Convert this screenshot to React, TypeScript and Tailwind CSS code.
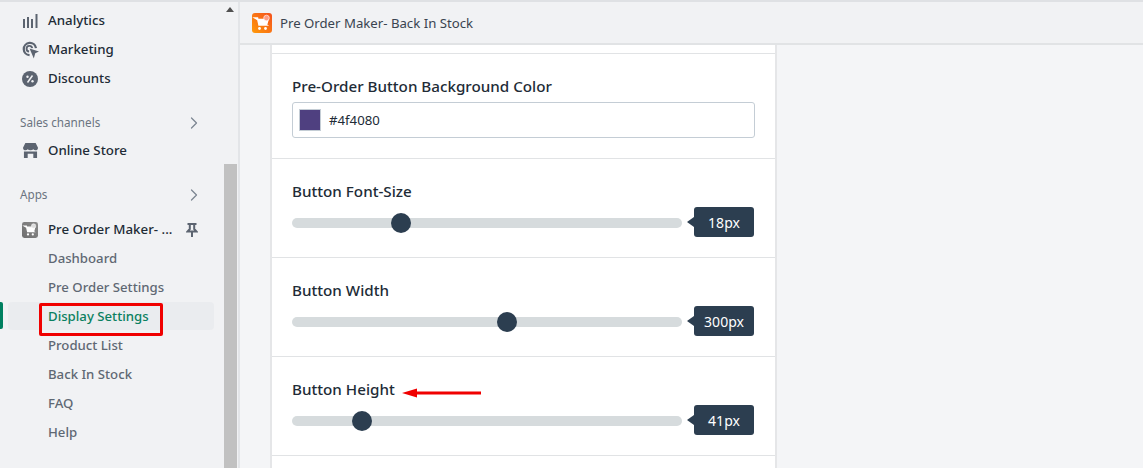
import React from "react";
import { ChevronRight } from "lucide-react";

const font = { fontFamily: '"Noto Sans", "Open Sans", sans-serif' };

const AnalyticsIcon = () => (
  <svg width="15" height="14" viewBox="0 0 15 14" fill="#5c6470">
    <rect x="0" y="5" width="2" height="9" />
    <rect x="4" y="3" width="2" height="11" />
    <rect x="8" y="5" width="2" height="9" />
    <rect x="12.500" y="0" width="2" height="14" />
  </svg>
);

const MarketingIcon = () => (
  <svg width="17" height="18" viewBox="0 0 18 18" fill="none">
    <path d="M8 14.500A6.500 6.500 0 1 1 14.800 7" stroke="#5c6470" strokeWidth="2.400" />
    <path d="M7.500 10.600A3 3 0 1 1 10.800 7" stroke="#5c6470" strokeWidth="2" />
    <path d="M8 7.500 18 10.500 14 12.500 12.500 18Z" fill="#5c6470" />
  </svg>
);

const DiscountIcon = () => (
  <svg width="16" height="16" viewBox="0 0 16 16">
    <circle cx="8" cy="8" r="8" fill="#5c6470" />
    <path d="M10.500 4.500 5.500 11.500" stroke="#f1f2f4" strokeWidth="1.500" />
    <circle cx="5.500" cy="5.800" r="1.200" fill="#f1f2f4" />
    <circle cx="10.500" cy="10.200" r="1.200" fill="#f1f2f4" />
  </svg>
);

const StoreIcon = () => (
  <svg width="15" height="15" viewBox="0 0 16 16" fill="#5c6470">
    <path d="M2.500 0h11L16 5c0 1.600-1.100 2.800-2.700 2.800-.9 0-1.700-.4-2.300-1.100-.7.7-1.700 1.100-3 1.100s-2.300-.4-3-1.100C4.400 7.400 3.600 7.800 2.700 7.800 1.100 7.800 0 6.600 0 5z" />
    <path d="M1 9h14v7h-4v-4.500H5V16H1z" />
  </svg>
);

const CartBadge = ({ size, grey }: { size: number; grey?: boolean }) => (
  <svg width={size} height={size} viewBox="0 0 20 20">
    <defs>
      <linearGradient id={grey ? "cartGrey" : "cartOrange"} x1="0" y1="1" x2="1" y2="0">
        <stop offset="0" stopColor={grey ? "#6f6f6f" : "#ff9a0a"} />
        <stop offset="1" stopColor={grey ? "#8a8a8a" : "#f4511e"} />
      </linearGradient>
    </defs>
    <rect width="20" height="20" rx="3" fill={`url(#${grey ? "cartGrey" : "cartOrange"})`} />
    <path d="M3 5h2.500l1.500 7h7.500l1.500-5.500H6l1 5.500h7.500z" fill="#fff" stroke="#fff" strokeWidth="1.500" />
    <circle cx="7.500" cy="15.500" r="1.400" fill="#fff" />
    <circle cx="13.500" cy="15.500" r="1.400" fill="#fff" />
    <circle cx="14.500" cy="5" r="2.800" fill={grey ? "#ddd" : "#ff9d85"} stroke="#fff" strokeWidth="0.600" />
  </svg>
);

const PinIcon = () => (
  <svg width="12" height="14" viewBox="0 0 12 14" fill="none" stroke="#5c6470" strokeWidth="2">
    <path d="M1.500 1h9M3.800 1v5L1.500 8.500h9L8.200 6V1M6 8.500V14" />
  </svg>
);

const NavRow = ({ icon, label }: { icon: React.ReactNode; label: string }) => (
  <div className="flex h-[29px] items-center">
    <div className="flex w-[48px] justify-center pl-[12px]">{icon}</div>
    <span className="text-[13.300px] font-medium text-[#212b36]">{label}</span>
  </div>
);

const SubRow = ({ label }: { label: string }) => (
  <div className="flex h-[29px] items-center pl-[48px] text-[13.200px] font-medium text-[#5f6873]">{label}</div>
);

const SectionHead = ({ label }: { label: string }) => (
  <div className="flex h-[20px] items-center justify-between pr-[20px] pl-[20px] text-[11.700px] text-[#6b7480]">
    <span>{label}</span>
    <ChevronRight size={20} strokeWidth={1.500} color="#7d8692" />
  </div>
);

const Slider = ({ label, value, thumb, arrow }: { label: string; value: string; thumb: number; arrow?: boolean }) => (
  <div className="h-[99px] border-b border-[#e1e3e5] px-[20px] pt-[21px]">
    <div className="relative text-[15.200px] leading-[22px] font-medium text-[#212b36]">
      {label}
      {arrow && (
        <svg className="absolute top-[10px] left-[110px]" width="80" height="10" viewBox="0 0 80 10">
          <path d="M13 3.500h66v3H13z" fill="#f00000" />
          <path d="M0 5 15 .5v9z" fill="#f00000" />
        </svg>
      )}
    </div>
    <div className="mt-[5px] flex items-center">
      <div className="relative mt-[2px] h-[10px] w-[390px] rounded-full bg-[#d6dbdd]">
        <div
          className="absolute top-[-5px] h-[20px] w-[20px] rounded-full bg-[#2c3e50]"
          style={{ left: thumb }}
        />
      </div>
      <div className="relative ml-[12px] flex h-[30px] w-[60px] items-center justify-center rounded-[3px] bg-[#2c3e50] text-[14px] text-white">
        <div className="absolute top-[10px] left-[-7px] h-0 w-0 border-y-[5px] border-r-[7px] border-y-transparent border-r-[#2c3e50]" />
        {value}
      </div>
    </div>
  </div>
);

export default function App() {
  return (
    <div style={font} className="flex h-[468px] w-[1143px] overflow-hidden border-t-2 border-[#dfe1e4] bg-[#f4f5f7]">
      {/* sidebar */}
      <div className="flex w-[240px] shrink-0 border-r-2 border-[#e3e5e8] bg-[#f1f2f4]">
        <div className="relative w-[224px] shrink-0 pt-[4px]">
          <NavRow icon={<AnalyticsIcon />} label="Analytics" />
          <NavRow icon={<MarketingIcon />} label="Marketing" />
          <NavRow icon={<DiscountIcon />} label="Discounts" />
          <div className="mt-[20px]">
            <SectionHead label="Sales channels" />
          </div>
          <div className="mt-[3px]">
            <NavRow icon={<StoreIcon />} label="Online Store" />
          </div>
          <div className="mt-[20px]">
            <SectionHead label="Apps" />
          </div>
          <div className="mt-[11px] flex h-[28px] items-center pr-[26px]">
            <div className="flex w-[48px] justify-center pl-[12px]">
              <CartBadge size={16} grey />
            </div>
            <span className="flex-1 text-[13.300px] font-medium text-[#212b36]">Pre Order Maker- ...</span>
            <PinIcon />
          </div>
          <SubRow label="Dashboard" />
          <SubRow label="Pre Order Settings" />
          <div className="relative flex h-[29px] items-center">
            <div className="absolute top-0 left-0 h-[27px] w-[3px] rounded-r-[2px] bg-[#008060]" />
            <div className="absolute top-0 left-[8px] h-[28px] w-[206px] rounded-[4px] bg-[#eaecef]" />
            <span className="relative pl-[48px] text-[13.200px] font-medium text-[#0a8060]">Display Settings</span>
            <div className="absolute top-[1px] left-[39px] h-[33px] w-[124px] rounded-[2px] border-[3px] border-[#f00000]" />
          </div>
          <SubRow label="Product List" />
          <SubRow label="Back In Stock" />
          <SubRow label="FAQ" />
          <SubRow label="Help" />
        </div>
        {/* scrollbar */}
        <div className="flex w-[14px] shrink-0 flex-col">
          <div className="mt-[5px] ml-[2px] h-0 w-0 border-x-[4px] border-b-[5px] border-x-transparent border-b-[#505050]" />
          <div className="mt-[152px] w-[13px] flex-1 bg-[#c1c1c1]" />
        </div>
      </div>

      {/* main */}
      <div className="flex min-w-0 flex-1 flex-col">
        <div className="flex h-[43px] shrink-0 items-center gap-[8px] border-b-2 border-[#e1e3e5] bg-[#f1f2f4] pl-[12px] text-[13.200px] text-[#3a4450]">
          <CartBadge size={20} />
          <span className="pt-[2px]">Pre Order Maker- Back In Stock</span>
        </div>
        <div className="ml-[30px] w-[507px] flex-1 border-x-2 border-[#e5e6e8] bg-white">
          <div className="h-[9px] border-b border-[#e1e3e5]" />
          <div className="h-[105px] border-b border-[#e1e3e5] px-[20px] pt-[21px]">
            <div className="text-[15.200px] leading-[22px] font-medium text-[#212b36]">
              Pre-Order Button Background Color
            </div>
            <div className="mt-[5px] flex h-[36px] w-[463px] items-center rounded-[3px] border border-[#c4cdd5] pl-[6px] text-[13.200px] text-[#212b36]">
              <div className="h-[22px] w-[22px] border border-[#c4cdd5] bg-[#4f4080]" />
              <span className="ml-[8px] pt-[2px]">#4f4080</span>
            </div>
          </div>
          <Slider label="Button Font-Size" value="18px" thumb={99} />
          <Slider label="Button Width" value="300px" thumb={205} />
          <Slider label="Button Height" value="41px" thumb={60} arrow />
        </div>
      </div>
    </div>
  );
}
